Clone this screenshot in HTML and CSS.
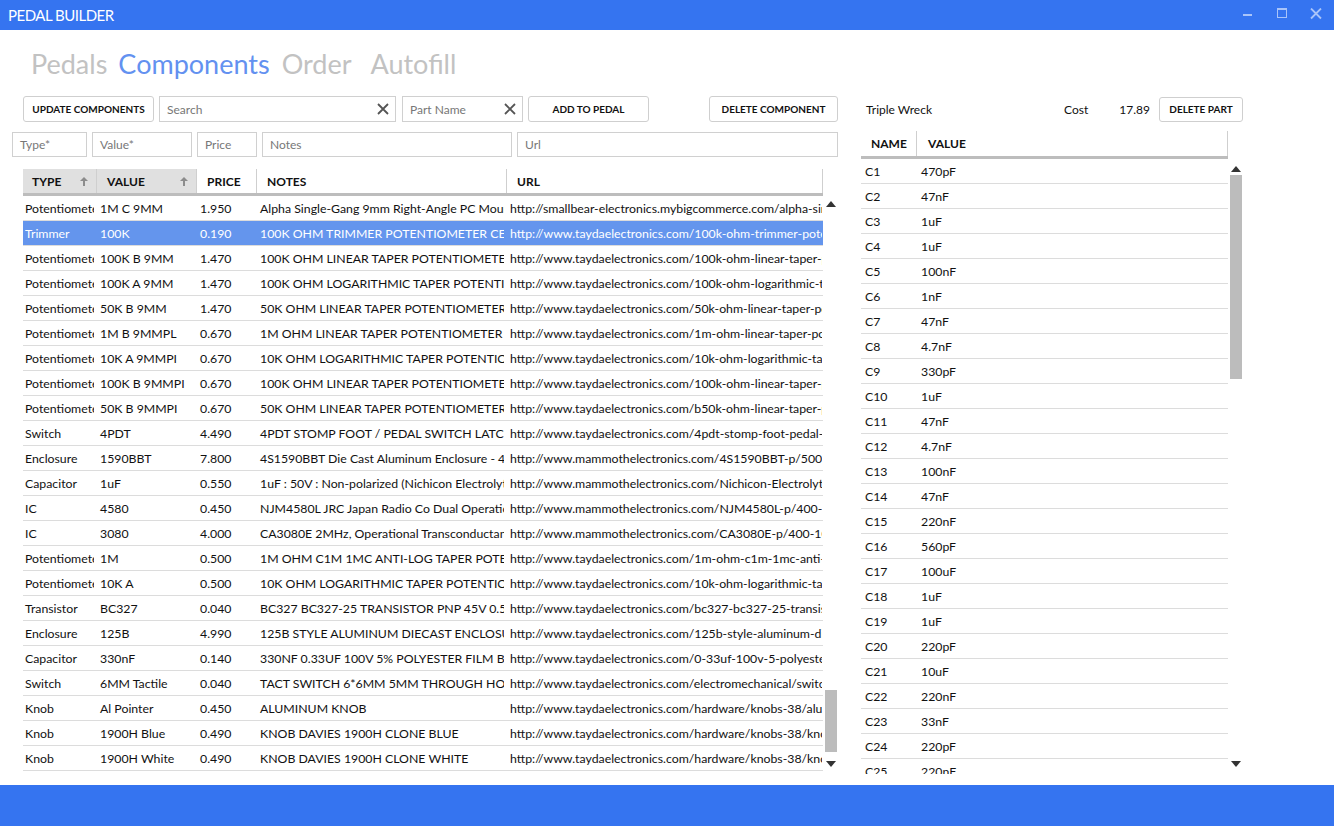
FILE: index.html
```html
<!DOCTYPE html>
<html>
<head>
<meta charset="utf-8">
<title>Pedal Builder</title>
<link rel="stylesheet" href="styles.css">
</head>
<body>
<div class="app">
  <header class="titlebar">
    <span class="title">PEDAL BUILDER</span>
    <div class="winctl">
      <svg class="wbtn" width="12" height="12" viewBox="0 0 12 12"><rect x="1" y="6" width="9" height="2" fill="#a9c4f9"/></svg>
      <svg class="wbtn" width="12" height="12" viewBox="0 0 12 12"><rect x="1.5" y="0.5" width="9" height="9" fill="none" stroke="#a9c4f9"/><rect x="1" y="0" width="10" height="2" fill="#a9c4f9"/></svg>
      <svg class="wbtn" width="12" height="12" viewBox="0 0 12 12"><path d="M1 0.5 L11 10.5 M11 0.5 L1 10.5" stroke="#a9c4f9" stroke-width="1.8"/></svg>
    </div>
  </header>

  <nav class="tabs">
    <span class="tab tab-pedals">Pedals</span>
    <span class="tab tab-active">Components</span>
    <span class="tab tab-order">Order</span>
    <span class="tab">Autofill</span>
  </nav>

  <main class="panes">
    <section class="left">
      <div class="toolbar">
        <button class="btn btn-update">UPDATE COMPONENTS</button>
        <div class="field field-search"><span class="ph">Search</span><svg class="clear" width="12" height="12" viewBox="0 0 12 12"><path d="M1 1 L11 11 M11 1 L1 11" stroke="#555" stroke-width="1.8"/></svg></div>
        <div class="field field-part"><span class="ph">Part Name</span><svg class="clear" width="12" height="12" viewBox="0 0 12 12"><path d="M1 1 L11 11 M11 1 L1 11" stroke="#555" stroke-width="1.8"/></svg></div>
        <button class="btn btn-add">ADD TO PEDAL</button>
        <button class="btn btn-delete">DELETE COMPONENT</button>
      </div>

      <div class="inputs">
        <div class="field in-type"><span class="ph">Type*</span></div>
        <div class="field in-value"><span class="ph">Value*</span></div>
        <div class="field in-price"><span class="ph">Price</span></div>
        <div class="field in-notes"><span class="ph">Notes</span></div>
        <div class="field in-url"><span class="ph">Url</span></div>
      </div>

      <div class="grid">
        <div class="ghead">
          <div class="hc sorted c-type">TYPE<svg class="sort" width="8" height="9" viewBox="0 0 8 9"><path d="M4 0 L8 4 L5 4 L5 9 L3 9 L3 4 L0 4 Z" fill="#8c8c8c"/></svg></div>
          <div class="hc sorted c-value">VALUE<svg class="sort" width="8" height="9" viewBox="0 0 8 9"><path d="M4 0 L8 4 L5 4 L5 9 L3 9 L3 4 L0 4 Z" fill="#8c8c8c"/></svg></div>
          <div class="hc c-price">PRICE</div>
          <div class="hc c-notes">NOTES</div>
          <div class="hc c-url">URL</div>
        </div>
        <div class="gbody">
          <div class="rows">
            <div class="row"><span class="c-type">Potentiometer</span><span class="c-value">1M C 9MM</span><span class="c-price">1.950</span><span class="c-notes">Alpha Single-Gang 9mm Right-Angle PC Mount</span><span class="c-url">http://smallbear-electronics.mybigcommerce.com/alpha-single</span></div>
            <div class="row selected"><span class="c-type">Trimmer</span><span class="c-value">100K</span><span class="c-price">0.190</span><span class="c-notes">100K OHM TRIMMER POTENTIOMETER CERMET</span><span class="c-url">http://www.taydaelectronics.com/100k-ohm-trimmer-potentiometer</span></div>
            <div class="row"><span class="c-type">Potentiometer</span><span class="c-value">100K B 9MM</span><span class="c-price">1.470</span><span class="c-notes">100K OHM LINEAR TAPER POTENTIOMETER RA</span><span class="c-url">http://www.taydaelectronics.com/100k-ohm-linear-taper-potentiometer</span></div>
            <div class="row"><span class="c-type">Potentiometer</span><span class="c-value">100K A 9MM</span><span class="c-price">1.470</span><span class="c-notes">100K OHM LOGARITHMIC TAPER POTENTIOMETER</span><span class="c-url">http://www.taydaelectronics.com/100k-ohm-logarithmic-taper</span></div>
            <div class="row"><span class="c-type">Potentiometer</span><span class="c-value">50K B 9MM</span><span class="c-price">1.470</span><span class="c-notes">50K OHM LINEAR TAPER POTENTIOMETER RC</span><span class="c-url">http://www.taydaelectronics.com/50k-ohm-linear-taper-potentiometer</span></div>
            <div class="row"><span class="c-type">Potentiometer</span><span class="c-value">1M B 9MMPL</span><span class="c-price">0.670</span><span class="c-notes">1M OHM LINEAR TAPER POTENTIOMETER ROUND</span><span class="c-url">http://www.taydaelectronics.com/1m-ohm-linear-taper-potentiometer</span></div>
            <div class="row"><span class="c-type">Potentiometer</span><span class="c-value">10K A 9MMPI</span><span class="c-price">0.670</span><span class="c-notes">10K OHM LOGARITHMIC TAPER POTENTIOMETER</span><span class="c-url">http://www.taydaelectronics.com/10k-ohm-logarithmic-taper</span></div>
            <div class="row"><span class="c-type">Potentiometer</span><span class="c-value">100K B 9MMPI</span><span class="c-price">0.670</span><span class="c-notes">100K OHM LINEAR TAPER POTENTIOMETER RA</span><span class="c-url">http://www.taydaelectronics.com/100k-ohm-linear-taper-potentiometer</span></div>
            <div class="row"><span class="c-type">Potentiometer</span><span class="c-value">50K B 9MMPI</span><span class="c-price">0.670</span><span class="c-notes">50K OHM LINEAR TAPER POTENTIOMETER RC</span><span class="c-url">http://www.taydaelectronics.com/b50k-ohm-linear-taper-potentiometer</span></div>
            <div class="row"><span class="c-type">Switch</span><span class="c-value">4PDT</span><span class="c-price">4.490</span><span class="c-notes">4PDT STOMP FOOT / PEDAL SWITCH LATCHING</span><span class="c-url">http://www.taydaelectronics.com/4pdt-stomp-foot-pedal-switch</span></div>
            <div class="row"><span class="c-type">Enclosure</span><span class="c-value">1590BBT</span><span class="c-price">7.800</span><span class="c-notes">4S1590BBT Die Cast Aluminum Enclosure - 4.6</span><span class="c-url">http://www.mammothelectronics.com/4S1590BBT-p/500-1590</span></div>
            <div class="row"><span class="c-type">Capacitor</span><span class="c-value">1uF</span><span class="c-price">0.550</span><span class="c-notes">1uF : 50V : Non-polarized (Nichicon Electrolytic)</span><span class="c-url">http://www.mammothelectronics.com/Nichicon-Electrolytic</span></div>
            <div class="row"><span class="c-type">IC</span><span class="c-value">4580</span><span class="c-price">0.450</span><span class="c-notes">NJM4580L JRC Japan Radio Co Dual Operational</span><span class="c-url">http://www.mammothelectronics.com/NJM4580L-p/400-1004</span></div>
            <div class="row"><span class="c-type">IC</span><span class="c-value">3080</span><span class="c-price">4.000</span><span class="c-notes">CA3080E 2MHz, Operational Transconductance</span><span class="c-url">http://www.mammothelectronics.com/CA3080E-p/400-1090</span></div>
            <div class="row"><span class="c-type">Potentiometer</span><span class="c-value">1M</span><span class="c-price">0.500</span><span class="c-notes">1M OHM C1M 1MC ANTI-LOG TAPER POTENTIOMETER</span><span class="c-url">http://www.taydaelectronics.com/1m-ohm-c1m-1mc-anti-log</span></div>
            <div class="row"><span class="c-type">Potentiometer</span><span class="c-value">10K A</span><span class="c-price">0.500</span><span class="c-notes">10K OHM LOGARITHMIC TAPER POTENTIOMETER</span><span class="c-url">http://www.taydaelectronics.com/10k-ohm-logarithmic-taper</span></div>
            <div class="row"><span class="c-type">Transistor</span><span class="c-value">BC327</span><span class="c-price">0.040</span><span class="c-notes">BC327 BC327-25 TRANSISTOR PNP 45V 0.5A</span><span class="c-url">http://www.taydaelectronics.com/bc327-bc327-25-transistor</span></div>
            <div class="row"><span class="c-type">Enclosure</span><span class="c-value">125B</span><span class="c-price">4.990</span><span class="c-notes">125B STYLE ALUMINUM DIECAST ENCLOSURE</span><span class="c-url">http://www.taydaelectronics.com/125b-style-aluminum-diecast</span></div>
            <div class="row"><span class="c-type">Capacitor</span><span class="c-value">330nF</span><span class="c-price">0.140</span><span class="c-notes">330NF 0.33UF 100V 5% POLYESTER FILM BOX</span><span class="c-url">http://www.taydaelectronics.com/0-33uf-100v-5-polyester-film</span></div>
            <div class="row"><span class="c-type">Switch</span><span class="c-value">6MM Tactile</span><span class="c-price">0.040</span><span class="c-notes">TACT SWITCH 6*6MM 5MM THROUGH HOLE</span><span class="c-url">http://www.taydaelectronics.com/electromechanical/switches</span></div>
            <div class="row"><span class="c-type">Knob</span><span class="c-value">Al Pointer</span><span class="c-price">0.450</span><span class="c-notes">ALUMINUM KNOB</span><span class="c-url">http://www.taydaelectronics.com/hardware/knobs-38/aluminum</span></div>
            <div class="row"><span class="c-type">Knob</span><span class="c-value">1900H Blue</span><span class="c-price">0.490</span><span class="c-notes">KNOB DAVIES 1900H CLONE BLUE</span><span class="c-url">http://www.taydaelectronics.com/hardware/knobs-38/knob</span></div>
            <div class="row"><span class="c-type">Knob</span><span class="c-value">1900H White</span><span class="c-price">0.490</span><span class="c-notes">KNOB DAVIES 1900H CLONE WHITE</span><span class="c-url">http://www.taydaelectronics.com/hardware/knobs-38/knob</span></div>
          </div>
          <div class="scrollbar sb-left">
            <svg class="arrow" width="10" height="6" viewBox="0 0 10 6"><path d="M0 6 L5 0 L10 6 Z" fill="#333"/></svg>
            <div class="track"><div class="thumb" style="margin-top:483px;height:62px"></div></div>
            <svg class="arrow" width="10" height="6" viewBox="0 0 10 6"><path d="M0 0 L5 6 L10 0 Z" fill="#333"/></svg>
          </div>
        </div>
      </div>
    </section>

    <section class="right">
      <div class="rtoolbar">
        <span class="pedal-name">Triple Wreck</span>
        <span class="cost-label">Cost</span>
        <span class="cost-value">17.89</span>
        <button class="btn btn-delpart">DELETE PART</button>
      </div>
      <div class="pgrid">
        <div class="phead">
          <div class="hc p-name">NAME</div>
          <div class="hc p-value">VALUE</div>
        </div>
        <div class="pbody">
          <div class="prows">
            <div class="prow"><span class="p-name">C1</span><span class="p-value">470pF</span></div>
            <div class="prow"><span class="p-name">C2</span><span class="p-value">47nF</span></div>
            <div class="prow"><span class="p-name">C3</span><span class="p-value">1uF</span></div>
            <div class="prow"><span class="p-name">C4</span><span class="p-value">1uF</span></div>
            <div class="prow"><span class="p-name">C5</span><span class="p-value">100nF</span></div>
            <div class="prow"><span class="p-name">C6</span><span class="p-value">1nF</span></div>
            <div class="prow"><span class="p-name">C7</span><span class="p-value">47nF</span></div>
            <div class="prow"><span class="p-name">C8</span><span class="p-value">4.7nF</span></div>
            <div class="prow"><span class="p-name">C9</span><span class="p-value">330pF</span></div>
            <div class="prow"><span class="p-name">C10</span><span class="p-value">1uF</span></div>
            <div class="prow"><span class="p-name">C11</span><span class="p-value">47nF</span></div>
            <div class="prow"><span class="p-name">C12</span><span class="p-value">4.7nF</span></div>
            <div class="prow"><span class="p-name">C13</span><span class="p-value">100nF</span></div>
            <div class="prow"><span class="p-name">C14</span><span class="p-value">47nF</span></div>
            <div class="prow"><span class="p-name">C15</span><span class="p-value">220nF</span></div>
            <div class="prow"><span class="p-name">C16</span><span class="p-value">560pF</span></div>
            <div class="prow"><span class="p-name">C17</span><span class="p-value">100uF</span></div>
            <div class="prow"><span class="p-name">C18</span><span class="p-value">1uF</span></div>
            <div class="prow"><span class="p-name">C19</span><span class="p-value">1uF</span></div>
            <div class="prow"><span class="p-name">C20</span><span class="p-value">220pF</span></div>
            <div class="prow"><span class="p-name">C21</span><span class="p-value">10uF</span></div>
            <div class="prow"><span class="p-name">C22</span><span class="p-value">220nF</span></div>
            <div class="prow"><span class="p-name">C23</span><span class="p-value">33nF</span></div>
            <div class="prow"><span class="p-name">C24</span><span class="p-value">220pF</span></div>
            <div class="prow"><span class="p-name">C25</span><span class="p-value">220nF</span></div>
          </div>
          <div class="scrollbar sb-right">
            <svg class="arrow" width="10" height="6" viewBox="0 0 10 6"><path d="M0 6 L5 0 L10 6 Z" fill="#333"/></svg>
            <div class="track"><div class="thumb" style="margin-top:3px;height:204px"></div></div>
            <svg class="arrow" width="10" height="6" viewBox="0 0 10 6"><path d="M0 0 L5 6 L10 0 Z" fill="#333"/></svg>
          </div>
        </div>
      </div>
    </section>
  </main>

  <footer class="statusbar"></footer>
</div>
</body>
</html>
```

FILE: styles.css
```css
* { box-sizing: border-box; }
html, body { margin: 0; padding: 0; }
body {
  width: 1334px;
  height: 826px;
  overflow: hidden;
  background: #fff;
  font-family: "Lato", "Open Sans", sans-serif;
  font-size: 12px;
  color: #111;
}
.app {
  height: 826px;
  display: flex;
  flex-direction: column;
}

/* title bar */
.titlebar {
  height: 30px;
  flex: none;
  background: #3574f0;
  display: flex;
  align-items: center;
  padding-left: 8px;
}
.title {
  color: #fff;
  font-size: 15px;
  letter-spacing: -0.5px;
}
.winctl {
  margin-left: auto;
  display: flex;
  align-items: center;
  gap: 22px;
  padding-right: 12px;
  margin-top: -3px;
}
.wbtn { display: block; }

/* tabs */
.tabs {
  height: 65px;
  flex: none;
  padding-left: 31px;
  padding-top: 16px;
  display: flex;
  align-items: flex-start;
}
.tab {
  font-size: 27px;
  line-height: 36px;
  color: #c2c2c2;
}
.tab-pedals { margin-right: 11px; }
.tab-active { color: #6391f0; margin-right: 12px; }
.tab-order { margin-right: 19px; }

/* panes */
.panes {
  flex: 1;
  display: flex;
  min-height: 0;
  padding-left: 12px;
  padding-top: 1px;
}
.left { width: 826px; flex: none; }
.right { width: 382px; flex: none; margin-left: 23px; }

/* toolbar */
.toolbar {
  display: flex;
  margin-left: 11px;
  height: 26px;
}
.btn {
  height: 26px;
  border: 1px solid #cfcfcf;
  border-radius: 3px;
  background: #fff;
  font-family: inherit;
  font-size: 10px;
  font-weight: 700;
  color: #111;
  padding: 0;
}
.btn-update { width: 131px; }
.btn-add { width: 121px; margin-left: 5px; }
.btn-delete { width: 129px; margin-left: 60px; }
.btn-delpart { width: 84px; height: 25px; }

.field {
  border: 1px solid #d0d0d0;
  background: #fff;
  display: flex;
  align-items: center;
  padding-left: 7px;
  height: 100%;
}
.ph { color: #777; font-size: 12px; white-space: nowrap; }
.clear { margin-left: auto; margin-right: 6px; }
.field-search { width: 237px; margin-left: 5px; height: 26px; }
.field-part { width: 121px; margin-left: 6px; height: 26px; }

.inputs {
  display: flex;
  margin-top: 10px;
  height: 25px;
  gap: 5px;
}
.in-type { width: 75px; }
.in-value { width: 100px; }
.in-price { width: 60px; }
.in-notes { width: 250px; }
.in-url { width: 321px; }

/* component grid */
.grid {
  margin-top: 12px;
  margin-left: 11px;
  width: 815px;
}
.ghead {
  display: flex;
  width: 800px;
  height: 27px;
  border-bottom: 3px solid #bdbdbd;
}
.hc {
  height: 24px;
  display: flex;
  align-items: center;
  font-weight: 700;
  font-size: 12px;
  padding-left: 10px;
  border-right: 1px solid #cfcfcf;
  color: #111;
}
.hc.sorted { background: #e0e0e0; }
.sort { margin-left: auto; margin-right: 8px; }
.ghead .c-type { padding-left: 9px; }

.c-type { width: 74px; }
.c-value { width: 100px; }
.c-price { width: 60px; }
.c-notes { width: 250px; }
.c-url { width: 316px; }

.gbody {
  display: flex;
  height: 576px;
}
.rows {
  width: 800px;
  overflow: hidden;
}
.row {
  display: flex;
  height: 25px;
  border-bottom: 1px solid #dcdcdc;
  align-items: center;
  font-size: 12.3px;
}
.row span {
  padding-left: 3px;
  white-space: nowrap;
  overflow: hidden;
  clip-path: inset(0 3px 0 0);
  color: #111;
}
.row .c-type { padding-left: 2px; }
.row .c-url { clip-path: inset(0 1px 0 0); }
.row.selected { background: #6495ed; }
.row.selected span { color: #fff; }

.scrollbar {
  width: 12px;
  margin-left: 2px;
  display: flex;
  flex-direction: column;
  align-items: center;
}
.arrow { flex: none; display: block; }
.track { flex: 1; width: 12px; }
.thumb { width: 12px; background: #bcbcbc; }
.sb-left { padding-top: 5px; padding-bottom: 5px; }

/* right pane */
.rtoolbar {
  display: flex;
  align-items: center;
  height: 26px;
}
.pedal-name { margin-left: 5px; font-size: 12px; }
.cost-label { margin-left: auto; font-size: 12px; }
.cost-value { margin-left: 31px; margin-right: 9px; font-size: 12px; }

.pgrid { margin-top: 9px; }
.phead {
  display: flex;
  width: 367px;
  height: 28px;
  border-bottom: 3px solid #bdbdbd;
}
.phead .hc { height: 25px; }
.p-name { width: 56px; }
.p-value { width: 311px; }
.phead .p-value { padding-left: 11px; }

.pbody {
  display: flex;
  height: 615px;
}
.prows {
  width: 367px;
  overflow: hidden;
}
.prow {
  display: flex;
  height: 25px;
  border-bottom: 1px solid #dcdcdc;
  align-items: center;
  font-size: 12.3px;
}
.prow span { padding-left: 4px; white-space: nowrap; color: #111; }
.sb-right { padding-top: 7px; padding-bottom: 7px; }

.statusbar {
  height: 41px;
  flex: none;
  background: #3574f0;
  margin-top: auto;
}
```
